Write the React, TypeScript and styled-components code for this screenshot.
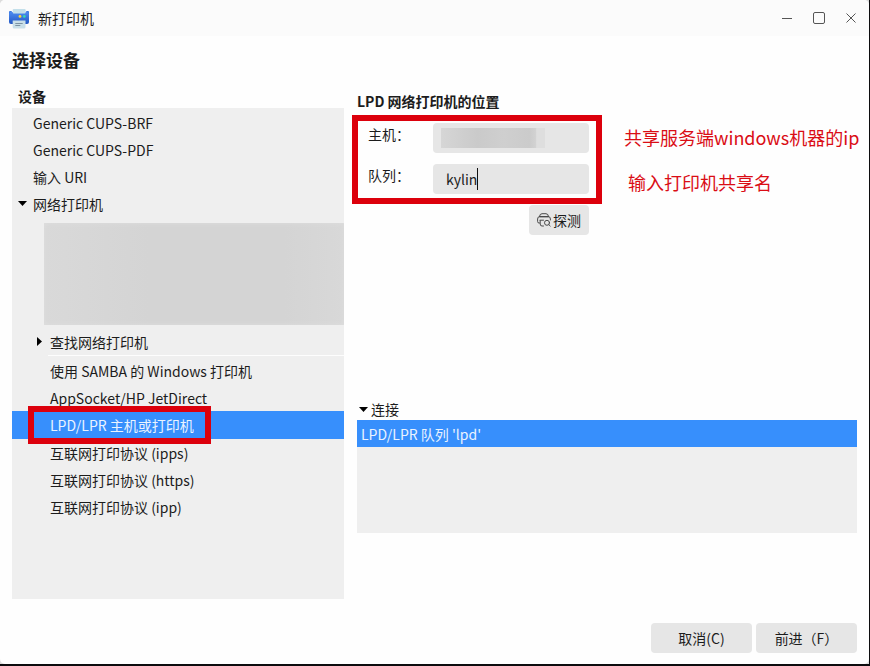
import React from "react";
import styled, { createGlobalStyle } from "styled-components";

const GlobalStyle = createGlobalStyle`
  *, *::before, *::after { box-sizing: border-box; }
  html, body, #root { height: 100%; }
  body { margin: 0; background: #dcdcdc; }
  body, button, input {
    font-family: "Noto Sans CJK SC", "Noto Sans", sans-serif;
    font-size: 14px;
    line-height: 20px;
    color: #1c1c1c;
  }
  h1, h2, p, ul { margin: 0; padding: 0; }
  button { border: 0; padding: 0; background: none; }
`;

const Desktop = styled.div`
  height: 100%;
  border: solid #0c0c0e;
  border-width: 0 1px 2px 0;
  background: #dcdcdc;
`;

const Window = styled.main`
  display: flex;
  flex-direction: column;
  height: 100%;
  background: #fefefe;
  border-radius: 5px;
  overflow: hidden;
`;

const TitleBar = styled.header`
  display: flex;
  align-items: center;
  gap: 8px;
  height: 36px;
  padding: 0 2px 0 8px;
  background: #fbfbfb;
`;

const WindowTitle = styled.span`
  flex: 1;
`;

const WindowControls = styled.div`
  display: flex;
`;

const ControlButton = styled.button`
  display: grid;
  place-items: center;
  width: 32px;
  height: 36px;
`;

const Body = styled.div`
  flex: 1;
  display: flex;
  flex-direction: column;
  padding: 11px 12px;
`;

const PageTitle = styled.h1`
  font-size: 17px;
  line-height: 26px;
  font-weight: 700;
`;

const Columns = styled.div`
  flex: 1;
  display: grid;
  grid-template-columns: minmax(0, 332fr) minmax(0, 500fr);
  gap: 13px;
`;

const DevicePane = styled.section`
  display: flex;
  flex-direction: column;
  padding-top: 12px;
`;

const DeviceHeading = styled.h2`
  padding: 0 0 1px 6px;
  font-size: 14px;
  line-height: 22px;
  font-weight: 700;
`;

const Tree = styled.ul`
  && { padding-top: 1px; }
  flex: 1;
  list-style: none;
  background: #efefef;
`;

const TreeRow = styled.li<{ $level: number; $selected?: boolean }>`
  position: relative;
  display: flex;
  align-items: center;
  height: ${(p) => (p.$selected ? 28 : 27)}px;
  padding-left: ${(p) => (p.$level === 0 ? 4 : 21)}px;
  white-space: nowrap;
  color: ${(p) => (p.$selected ? "#eaf3ff" : "inherit")};
  background: ${(p) => (p.$selected ? "#378ffc" : "transparent")};
`;

const ArrowSlot = styled.span`
  display: grid;
  place-items: center;
  width: 17px;
  height: 20px;
  padding-right: 5px;
`;

const HiddenPrinters = styled.li`
  height: 102px;
  margin: 6px 0 3px 32px;
  background: linear-gradient(90deg, #d9d9d9, #d4d4d4 35%, #d4d4d4 80%, #d8d8d8);
  box-shadow: inset 0 0 4px #dfdfdf;
`;

const Divider = styled.li`
  height: 1px;
  margin: 0 0 1px 36px;
  background: #fdfdfd;
`;

const DetailPane = styled.section`
  display: flex;
  flex-direction: column;
  padding-top: 17px;
`;

const DetailHeading = styled(DeviceHeading)`
  padding: 0;
`;

const LocationRow = styled.div`
  display: flex;
  align-items: flex-start;
  gap: 35px;
  margin-top: 11px;
`;

const Form = styled.form`
  position: relative;
  display: grid;
  grid-template-columns: 65px 156px;
  row-gap: 11px;
  padding-left: 11px;
`;

const FieldLabel = styled.label`
  padding-top: 1px;
`;

const FieldBox = styled.div`
  position: relative;
  display: flex;
  align-items: center;
  height: 30px;
  border-radius: 4px;
  background: #e6e6e6;
`;

const TextInput = styled.input`
  width: 100%;
  height: 30px;
  padding: 0 13px;
  border: 0;
  outline: 0;
  background: transparent;
`;

const Redaction = styled.span`
  position: absolute;
  left: 8px;
  top: 5px;
  width: 104px;
  height: 20px;
  background: linear-gradient(90deg, #d6d6d6, #cacaca 35%, #cfcfcf 60%, #cbcbcb 85%, #d2d2d2 91%, #dedede 92%);
`;

const Caret = styled.span`
  position: absolute;
  left: 44px;
  top: 4px;
  width: 1px;
  height: 22px;
  background: #111;
`;

const ProbeButton = styled.button`
  grid-column: 2;
  justify-self: end;
  display: flex;
  align-items: center;
  justify-content: center;
  gap: 2px;
  width: 60px;
  height: 30px;
  border-radius: 4px;
  background: #e6e6e6;
`;

const Notes = styled.div`
  display: grid;
  gap: 19px;
  padding-top: 1px;
  font-size: 18px;
  line-height: 26px;
  color: #da0d15;
  white-space: nowrap;
`;

const Note = styled.p<{ $indent?: boolean }>`
  && { padding-left: ${(p) => (p.$indent ? 4 : 0)}px; }
`;

const Highlight = styled.span<{ $area: "form" | "row" }>`
  position: absolute;
  border: 6px solid #dc000c;
  pointer-events: none;
  ${(p) =>
    p.$area === "form"
      ? "left: -5px; top: -8px; width: 250px; height: 89px;"
      : "left: 16px; top: -5px; width: 183px; height: 38px;"}
`;

const Connections = styled.section`
  margin-top: 163px;
`;

const ConnectionToggle = styled.button`
  display: flex;
  align-items: center;
  gap: 3px;
  height: 22px;
  padding-left: 2px;
`;

const ConnectionList = styled.ul`
  height: 113px;
  list-style: none;
  background: #efefef;
`;

const ConnectionRow = styled.li`
  height: 27px;
  padding: 4px;
  color: #eaf3ff;
  background: #378ffc;
`;

const Footer = styled.footer`
  display: flex;
  justify-content: flex-end;
  gap: 4px;
  margin-top: 24px;
`;

const ActionButton = styled.button`
  width: 101px;
  height: 30px;
  padding-bottom: 1px;
  border-radius: 4px;
  background: #e6e6e6;
`;

const PrinterLogo = () => (
  <svg width="22" height="22" viewBox="0 0 22 22" aria-hidden="true">
    <defs>
      <linearGradient id="printerBody" x1="0" y1="0" x2="0" y2="1">
        <stop offset="0" stopColor="#4c8bf0" />
        <stop offset="1" stopColor="#2257c4" />
      </linearGradient>
    </defs>
    <rect x="1" y="4" width="3" height="4" rx="1" fill="#3a78e0" />
    <rect x="18" y="4" width="3" height="4" rx="1" fill="#3a78e0" />
    <rect x="1" y="5" width="20" height="12" rx="2" fill="url(#printerBody)" />
    <rect x="4.700" y="2" width="13" height="4.500" rx="1" fill="#c3dfea" />
    <circle cx="12" cy="9.400" r="1.400" fill="#ffd23c" />
    <circle cx="16.300" cy="9.400" r="1.400" fill="#35d8b0" />
    <path d="M4.700 13.500h12.800V20q0 1.500-1.500 1.500H6.200q-1.500 0-1.500-1.500z" fill="#c9dfe8" />
    <path d="M7.300 16.500h7.400M7.300 18.500h5" stroke="#7b92a3" strokeWidth="1" />
  </svg>
);

const ProbeIcon = () => (
  <svg width="14" height="14" viewBox="0 0 14 14" fill="none" stroke="#4a4a4a" strokeWidth="1" strokeLinecap="round" aria-hidden="true">
    <path d="M2.500 3.500Q2.700.7 5 .7h4q2.300 0 2.500 2.800z" />
    <path d="M2.500 10H2Q.6 10 .6 8.500V6Q.6 3.500 3 3.500h8q2.400 0 2.400 2.500v1" />
    <path d="M3 7.200h3.500M3.200 7.500v3.500q0 2 1.800 2h1.500" />
    <circle cx="10" cy="9.800" r="2.500" />
    <path d="M11.900 11.700l1.300 1.300" />
  </svg>
);

const ArrowDown = () => (
  <svg width="9" height="5" viewBox="0 0 9 5" aria-hidden="true">
    <path d="M0 0h9L4.500 5z" fill="#000" />
  </svg>
);

const ArrowRight = () => (
  <svg width="5" height="9" viewBox="0 0 5 9" aria-hidden="true">
    <path d="M0 0v9l5-4.500z" fill="#000" />
  </svg>
);

const devices = [
  "使用 SAMBA 的 Windows 打印机",
  "AppSocket/HP JetDirect",
  "LPD/LPR 主机或打印机",
  "互联网打印协议 (ipps)",
  "互联网打印协议 (https)",
  "互联网打印协议 (ipp)",
];
const selectedDevice = devices[2];

export default function App() {
  return (
    <>
      <GlobalStyle />
      <Desktop>
        <Window>
          <TitleBar>
            <PrinterLogo />
            <WindowTitle>新打印机</WindowTitle>
            <WindowControls>
              <ControlButton aria-label="最小化">
                <svg width="12" height="12" viewBox="0 0 12 12" stroke="#555"><path d="M1 6.500h10" /></svg>
              </ControlButton>
              <ControlButton aria-label="最大化">
                <svg width="12" height="12" viewBox="0 0 12 12" fill="none" stroke="#555"><rect x=".5" y=".5" width="11" height="11" rx="1.500" /></svg>
              </ControlButton>
              <ControlButton aria-label="关闭">
                <svg width="12" height="12" viewBox="0 0 12 12" stroke="#555"><path d="M1.500 1.500l9 9M10.500 1.500l-9 9" /></svg>
              </ControlButton>
            </WindowControls>
          </TitleBar>
          <Body>
            <PageTitle>选择设备</PageTitle>
            <Columns>
              <DevicePane>
                <DeviceHeading>设备</DeviceHeading>
                <Tree>
                  {["Generic CUPS-BRF", "Generic CUPS-PDF", "输入 URI"].map((name) => (
                    <TreeRow key={name} $level={0}><ArrowSlot />{name}</TreeRow>
                  ))}
                  <TreeRow $level={0}><ArrowSlot><ArrowDown /></ArrowSlot>网络打印机</TreeRow>
                  <HiddenPrinters />
                  <TreeRow $level={1}><ArrowSlot><ArrowRight /></ArrowSlot>查找网络打印机</TreeRow>
                  <Divider />
                  {devices.map((name) => (
                    <TreeRow key={name} $level={1} $selected={name === selectedDevice}>
                      <ArrowSlot />{name}
                      {name === selectedDevice && <Highlight $area="row" />}
                    </TreeRow>
                  ))}
                </Tree>
              </DevicePane>
              <DetailPane>
                <DetailHeading>LPD 网络打印机的位置</DetailHeading>
                <LocationRow>
                  <Form onSubmit={(e) => e.preventDefault()}>
                    <FieldLabel htmlFor="host">主机：</FieldLabel>
                    <FieldBox>
                      <TextInput id="host" />
                      <Redaction />
                    </FieldBox>
                    <FieldLabel htmlFor="queue">队列：</FieldLabel>
                    <FieldBox>
                      <TextInput id="queue" defaultValue="kylin" />
                      <Caret />
                    </FieldBox>
                    <ProbeButton type="button"><ProbeIcon />探测</ProbeButton>
                    <Highlight $area="form" />
                  </Form>
                  <Notes>
                    <Note>共享服务端windows机器的ip</Note>
                    <Note $indent>输入打印机共享名</Note>
                  </Notes>
                </LocationRow>
                <Connections>
                  <ConnectionToggle aria-expanded="true"><ArrowDown />连接</ConnectionToggle>
                  <ConnectionList>
                    <ConnectionRow>LPD/LPR 队列 'lpd'</ConnectionRow>
                  </ConnectionList>
                </Connections>
              </DetailPane>
            </Columns>
            <Footer>
              <ActionButton>取消(C)</ActionButton>
              <ActionButton>前进（F）</ActionButton>
            </Footer>
          </Body>
        </Window>
      </Desktop>
    </>
  );
}
